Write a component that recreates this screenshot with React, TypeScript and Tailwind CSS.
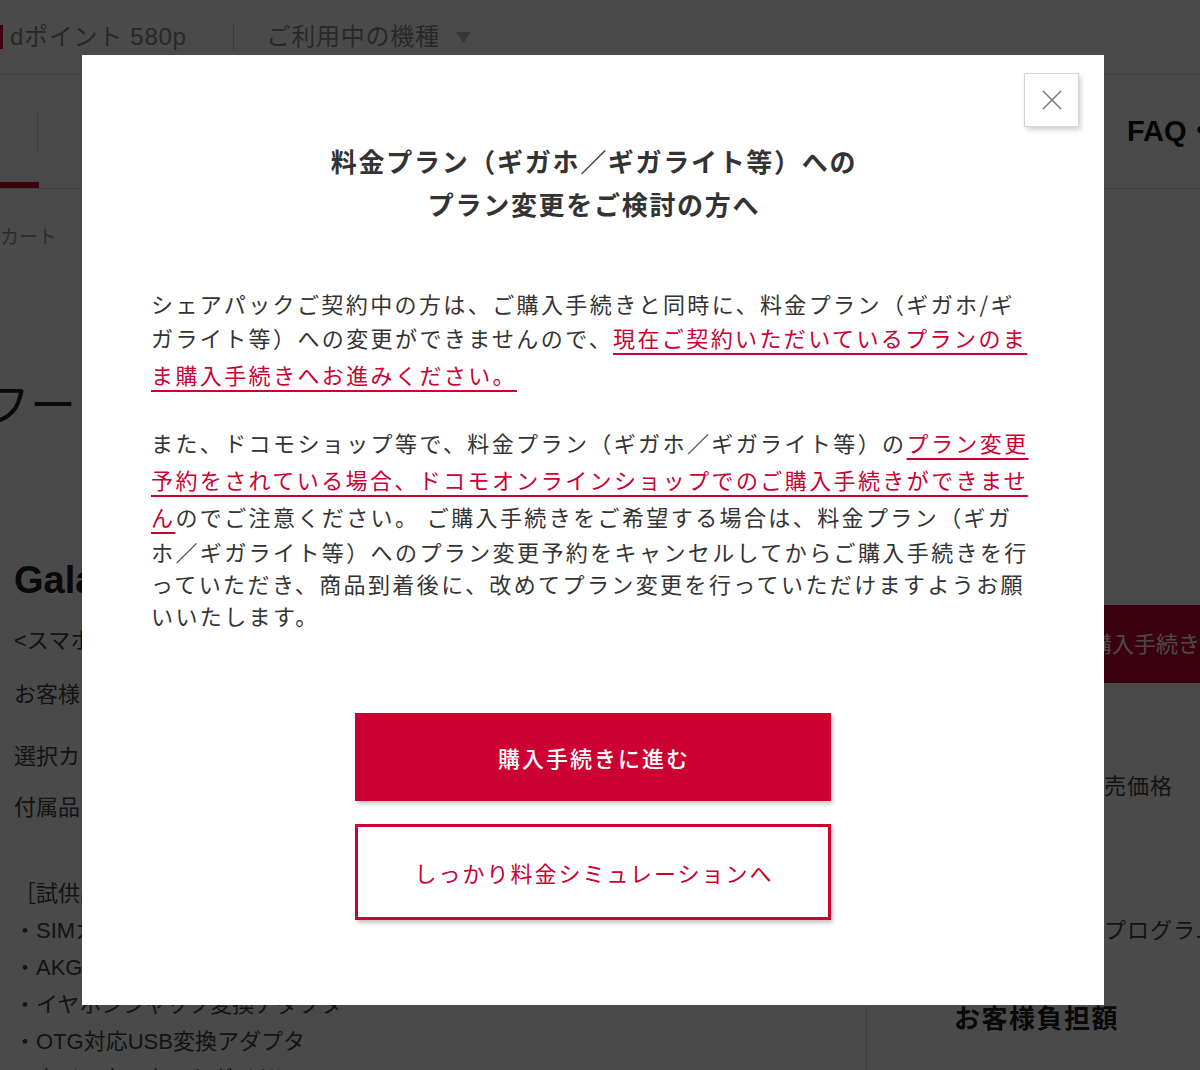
import React from 'react';

const Link: React.FC<{ children: React.ReactNode }> = ({ children }) => (
  <span className="text-[#cc0033] underline decoration-[#cc0033] decoration-2 underline-offset-[6px] leading-[37px]">
    {children}
  </span>
);

const App: React.FC = () => {
  return (
    <div className="relative h-[1070px] w-[1200px] overflow-hidden bg-white text-[#333] [font-family:'Liberation_Sans','Noto_Sans_CJK_JP',sans-serif]">
      {/* page behind the dialog */}
      <header className="flex h-[75px] items-center border-b border-[#ddd] text-[24px] tracking-[0.03em] text-[#8a8a8a]">
        <span className="h-[24px] w-[3px] bg-[#cc0033]" />
        <span className="ml-[7px]">dポイント 580p</span>
        <span className="ml-[46px] h-[25px] w-px bg-[#ccc]" />
        <span className="ml-[33px]">ご利用中の機種</span>
        <svg className="ml-[16px]" width="15" height="11" viewBox="0 0 15 11">
          <path d="M0 0H15L7.5 11Z" fill="#bbb" />
        </svg>
      </header>

      <nav className="flex h-[114px] border-b border-[#ddd]">
        <div className="flex w-[39px] shrink-0 flex-col">
          <div className="flex flex-1 items-center justify-end pr-[1px] pt-[6px]">
            <span className="h-[43px] w-px bg-[#ddd]" />
          </div>
          <span className="h-[6px] bg-[#cc0033]" />
        </div>
        <div className="flex shrink-0 items-center pl-[1088px] text-[29px] font-bold whitespace-nowrap text-[#111]">
          FAQ・お問い合わせ
        </div>
      </nav>

      <div className="mt-[36px] text-[19px] leading-[26px] text-[#999]">カート</div>

      <div className="flex">
        <div className="w-[867px] shrink-0 border-r border-[#ddd] whitespace-nowrap">
          <div className="-ml-[16px] mt-[128px] text-[46px] leading-[52px] text-[#222]">フー</div>
          <div className="mt-[126px] pl-[14px] text-[38px] font-bold leading-[46px] text-[#222]">Galaxy S22 Ultra</div>
          <div className="pl-[14px] text-[22px] text-[#444]">
            <p className="mt-[22px] leading-[32px]">&lt;スマホ本体のみのお届けとなります&gt;</p>
            <p className="mt-[22px] leading-[32px]">お客様のご利用状況により異なります</p>
            <p className="mt-[30px] leading-[32px]">選択カラー：ファントムブラック</p>
            <p className="mt-[19px] leading-[32px]">付属品</p>
            <ul className="mt-[51px] leading-[37px]">
              <li>［試供品］</li>
              <li>・SIMカード取り出し用ピン</li>
              <li>・AKG製イヤホン</li>
              <li>・イヤホンジャック変換アダプタ</li>
              <li>・OTG対応USB変換アダプタ</li>
              <li>・クイックスタートガイド</li>
            </ul>
          </div>
        </div>
        <div className="flex-1 whitespace-nowrap text-[22px] text-[#444]">
          <div className="ml-[50px] mt-[354px] flex h-[78px] w-[400px] items-center bg-[#cc0033] pl-[173px] text-white">
            購入手続きへ
          </div>
          <p className="ml-[214px] mt-[88px] leading-[32px] tracking-[1px]">販売価格</p>
          <p className="ml-[145px] mt-[112px] leading-[32px] tracking-[1px]">カエドキプログラム</p>
          <p className="ml-[87px] mt-[54px] text-[26px] font-bold leading-[36px] tracking-[1.5px] text-[#222]">お客様負担額</p>
        </div>
      </div>

      {/* dim layer */}
      <div className="absolute inset-0 bg-[rgba(0,0,0,0.71)]" />

      {/* dialog */}
      <div className="absolute left-[82px] top-[55px] flex h-[950px] w-[1022px] flex-col items-center bg-white [font-family:'Noto_Sans_CJK_JP',sans-serif]">
        <button className="absolute right-[25px] top-[18px] flex h-[54px] w-[55px] items-center justify-center border border-[#d5d5d5] bg-white shadow-[2px_3px_5px_rgba(0,0,0,0.18)]">
          <svg width="20" height="20" viewBox="0 0 20 20">
            <path d="M1 1L19 19M19 1L1 19" stroke="#777" strokeWidth="1.5" />
          </svg>
        </button>

        <h2 className="mt-[84px] pl-[2px] text-center text-[26px] font-bold leading-[43px] tracking-[1.7px] text-[#333]">
          料金プラン（ギガホ／ギガライト等）への
          <br />
          プラン変更をご検討の方へ
        </h2>

        <div className="mt-[62px] w-full px-[69px] text-[22px] leading-[32px] tracking-[2.4px] whitespace-nowrap text-[#333]">
          <p>
            シェアパックご契約中の方は、ご購入手続きと同時に、料金プラン（ギガホ/ギ
            <br />
            ガライト等）への変更ができませんので、
            <Link>
              現在ご契約いただいているプランのま
              <br />
              ま購入手続きへお進みください。
            </Link>
          </p>
          <p className="mt-[31px]">
            また、ドコモショップ等で、料金プラン（ギガホ／ギガライト等）の
            <Link>
              プラン変更
              <br />
              予約をされている場合、ドコモオンラインショップでのご購入手続きができませ
              <br />ん
            </Link>
            のでご注意ください。 ご購入手続きをご希望する場合は、料金プラン（ギガ
            <br />
            ホ／ギガライト等）へのプラン変更予約をキャンセルしてからご購入手続きを行
            <br />
            っていただき、商品到着後に、改めてプラン変更を行っていただけますようお願
            <br />
            いいたします。
          </p>
        </div>

        <button className="mt-[82px] flex h-[88px] w-[476px] items-center justify-center bg-[#cc0033] pl-[2px] text-[22px] font-medium tracking-[2px] text-white shadow-[2px_3px_4px_rgba(0,0,0,0.22)]">
          購入手続きに進む
        </button>
        <button className="mt-[23px] flex h-[96px] w-[476px] items-center justify-center border-[3px] border-[#cc0033] bg-white pl-[2px] text-[22px] tracking-[2px] text-[#cc0033] shadow-[2px_3px_4px_rgba(0,0,0,0.22)]">
          しっかり料金シミュレーションへ
        </button>
      </div>
    </div>
  );
};

export default App;
